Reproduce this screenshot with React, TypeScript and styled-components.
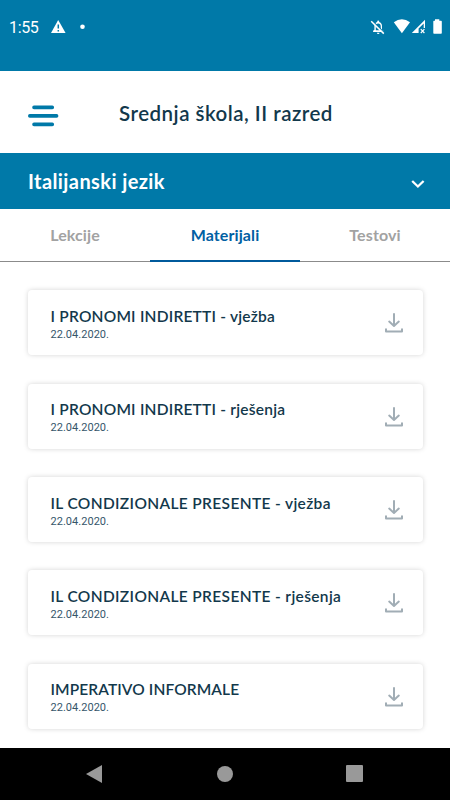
import React from 'react';
import styled, { createGlobalStyle } from 'styled-components';

const Global = createGlobalStyle`
  * { box-sizing: border-box; }
  body { margin: 0; background: #fff; font-family: Lato, "Open Sans", sans-serif; }
`;

const Screen = styled.div`
  width: 450px;
  height: 800px;
  overflow: hidden;
  display: flex;
  flex-direction: column;
  background: #fff;
`;

const StatusBar = styled.div`
  height: 71px;
  flex: none;
  padding: 17px 8px 0 9px;
  display: flex;
  align-items: flex-start;
  justify-content: space-between;
  background: #0079a8;
  color: #fff;
`;

const StatusGroup = styled.div`
  display: flex;
  height: 20px;
  align-items: center;
`;

const Clock = styled.span`
  font: 400 16px/20px Roboto, sans-serif;
  width: 42px;
  padding-top: 2px;
  letter-spacing: -0.35px;
`;

const Header = styled.header`
  height: 82px;
  flex: none;
  display: flex;
  align-items: center;
  padding: 3px 0 0 28px;
`;

const MenuIcon = styled.svg`
  width: 31px;
  height: 22px;
  margin-top: 5px;
`;

const Title = styled.h1`
  margin: 0 0 0 60px;
  font-size: 20.5px;
  line-height: 26px;
  padding-bottom: 1px;
  font-weight: 600;
  letter-spacing: 0.49px;
  color: #12384b;
  white-space: nowrap;
`;

const Subject = styled.div`
  height: 55.5px;
  flex: none;
  display: flex;
  align-items: center;
  justify-content: space-between;
  padding: 0 25px 0 28px;
  background: #0079a8;
  color: #fff;
`;

const SubjectName = styled.span`
  font-size: 20px;
  line-height: 26px;
  font-weight: 700;
  letter-spacing: 0.41px;
`;

const Chevron = styled.svg`
  width: 14px;
  height: 10px;
  margin-top: 6px;
`;

const Tabs = styled.nav`
  height: 53.5px;
  flex: none;
  display: grid;
  grid-template-columns: repeat(3, 1fr);
`;

const Tab = styled.div<{ $active?: boolean }>`
  display: flex;
  justify-content: center;
  padding-top: 16px;
  font-size: 16px;
  line-height: 20px;
  font-weight: 700;
  letter-spacing: 0.1px;
  color: ${(p) => (p.$active ? '#0060a3' : '#a2a2a2')};
  border-bottom: ${(p) => (p.$active ? '2px solid #005a9c' : '1px solid #8b8b8b')};
`;

const List = styled.main`
  flex: 1;
  min-height: 0;
  display: flex;
  flex-direction: column;
  gap: 28.4px;
  padding: 28.2px 27.5px 0 28px;
`;

const Card = styled.article`
  height: 65px;
  flex: none;
  display: flex;
  justify-content: space-between;
  padding: 15.7px 19px 0 22.5px;
  border-radius: 4px;
  background: #fff;
  box-shadow: 0 0 5px rgba(0, 0, 0, 0.17);
`;

const CardTitle = styled.h2<{ $spacing: number }>`
  margin: 0;
  font-size: 15.5px;
  line-height: 20px;
  font-weight: 600;
  letter-spacing: ${(p) => p.$spacing}px;
  color: #12384b;
  white-space: nowrap;
`;

const CardDate = styled.div`
  margin-top: 1px;
  font: 400 11px/15px Roboto, sans-serif;
  letter-spacing: 0.03px;
  color: #36566a;
`;

const DownloadIcon = styled.svg`
  width: 20px;
  height: 22px;
  margin-top: 6.3px;
`;

const NavBar = styled.footer`
  height: 52.5px;
  flex: none;
  display: flex;
  align-items: center;
  justify-content: space-between;
  padding: 0 87px 0 85px;
  background: #000;
`;

const materials = [
  { title: 'I PRONOMI INDIRETTI - vježba', spacing: 0.22 },
  { title: 'I PRONOMI INDIRETTI - rješenja', spacing: 0.22 },
  { title: 'IL CONDIZIONALE PRESENTE - vježba', spacing: 0.35 },
  { title: 'IL CONDIZIONALE PRESENTE - rješenja', spacing: 0.35 },
  { title: 'IMPERATIVO INFORMALE', spacing: 0.11 },
];

export default function App() {
  return (
    <>
      <Global />
      <Screen>
        <StatusBar>
          <StatusGroup>
            <Clock>1:55</Clock>
            <svg width="36" height="20" viewBox="0 0 36 20">
              <path d="M7.2 3L14.6 16H0z" fill="#fff" />
              <path d="M7.3 7.5v4M7.3 13v1.6" stroke="#0079a8" strokeWidth="1.5" />
              <circle cx="31.5" cy="9.7" r="2.3" fill="#fff" />
            </svg>
          </StatusGroup>
          <StatusGroup>
            <svg width="72" height="20" viewBox="370 17 72 20" fill="#fff">
              <path fillRule="evenodd" d="M373.1 32v-1.2l1.3-1v-3.7c0-2 1.1-3.5 2.8-4v-.7a1 1 0 0 1 2 0v.7c1.7.5 2.8 2 2.8 4v3.7l1.3 1V32zm2.7-1.8h4.9v-4c0-1.5-1-2.6-2.5-2.6s-2.4 1.1-2.4 2.6zM376.9 32.8h2.6a1.3 1.3 0 0 1-2.6 0z" />
              <path d="M371.9 20.4l12.2 12.3" stroke="#0079a8" strokeWidth="1.4" />
              <path d="M371.2 21.2l12.6 12.4" stroke="#fff" strokeWidth="1.5" />
              <path d="M393.8 22.2Q401.8 16.4 410 22.2L401.9 33.2z" />
              <path d="M411.8 33L425 19.8V28h-1.3v-4.6L418.6 28.5V33z" fillRule="evenodd" />
              <path d="M420.8 29.2l3.6 3.8m0-3.8l-3.6 3.8" stroke="#fff" strokeWidth="1.2" />
              <path d="M435 19.3h4.3v1.4h1.8q.7 0 .7.7v11.7q0 .7-.7.7H434q-.7 0-.7-.7V21.4q0-.7.7-.7h1z" />
            </svg>
          </StatusGroup>
        </StatusBar>
        <Header>
          <MenuIcon viewBox="0 0 31 22" stroke="#0079a8" strokeWidth="3.6" strokeLinecap="round">
            <path d="M6 2.4h18.3M1.8 10.9h26.8M6 19.4h18.3" />
          </MenuIcon>
          <Title>Srednja škola, II razred</Title>
        </Header>
        <Subject>
          <SubjectName>Italijanski jezik</SubjectName>
          <Chevron viewBox="0 0 14 10" fill="none" stroke="#fff" strokeWidth="2.3">
            <path d="M1.2 2l5.7 5.5L12.6 2" />
          </Chevron>
        </Subject>
        <Tabs>
          <Tab>Lekcije</Tab>
          <Tab $active>Materijali</Tab>
          <Tab>Testovi</Tab>
        </Tabs>
        <List>
          {materials.map((item) => (
            <Card key={item.title}>
              <div>
                <CardTitle $spacing={item.spacing}>{item.title}</CardTitle>
                <CardDate>22.04.2020.</CardDate>
              </div>
              <DownloadIcon viewBox="0 0 20 22" fill="none" stroke="#a1adb5" strokeWidth="2" strokeLinecap="round" strokeLinejoin="round">
                <path d="M10 2v11.8M5.2 9.6l4.8 4.3 4.8-4.3M2 17.3v2.2h16v-2.2" />
              </DownloadIcon>
            </Card>
          ))}
        </List>
        <NavBar>
          <svg width="18" height="20" viewBox="0 0 18 20">
            <path d="M1 10L17 1v18z" fill="#999" />
          </svg>
          <svg width="18" height="18" viewBox="0 0 18 18">
            <circle cx="9" cy="9" r="8" fill="#999" />
          </svg>
          <svg width="17" height="17" viewBox="0 0 17 17">
            <rect width="17" height="17" rx="1" fill="#999" />
          </svg>
        </NavBar>
      </Screen>
    </>
  );
}
